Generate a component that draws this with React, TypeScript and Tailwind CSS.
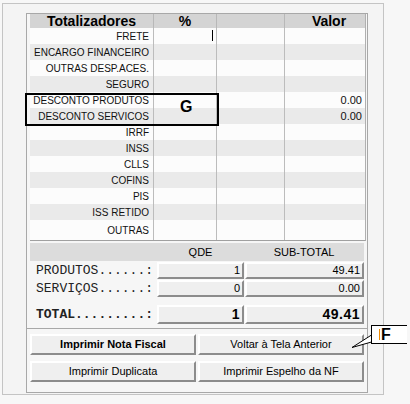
import React from 'react'

const rows = [
  { label: 'FRETE', valor: '' },
  { label: 'ENCARGO FINANCEIRO', valor: '' },
  { label: 'OUTRAS DESP.ACES.', valor: '' },
  { label: 'SEGURO', valor: '' },
  { label: 'DESCONTO PRODUTOS', valor: '0.00' },
  { label: 'DESCONTO SERVICOS', valor: '0.00' },
  { label: 'IRRF', valor: '' },
  { label: 'INSS', valor: '' },
  { label: 'CLLS', valor: '' },
  { label: 'COFINS', valor: '' },
  { label: 'PIS', valor: '' },
  { label: 'ISS RETIDO', valor: '' },
  { label: 'OUTRAS', valor: '' },
]

const sans = "font-['Liberation_Sans',Arial,sans-serif]"
const mono = "font-['Liberation_Mono','Courier_New',monospace]"

const raised =
  'bg-[#efefef] border-2 border-t-white border-l-white border-r-[#8c8c8c] border-b-[#8c8c8c]'

function Campo({ label, qde, sub, bold }: { label: string; qde: string; sub: string; bold?: boolean }) {
  return (
    <div className={`flex items-center ${bold ? 'h-[19px]' : 'h-[17px]'}`}>
      <div className={`w-[127px] pl-[6px] text-[13px] text-[#222] ${mono} ${bold ? 'font-bold' : ''}`}>{label}</div>
      <div
        className={`w-[87px] h-full ${raised} flex items-center justify-end pr-[2px] ${
          bold ? 'text-[14px] font-bold tracking-[0.5px]' : 'text-[11px]'
        }`}
      >
        {qde}
      </div>
      <div
        className={`ml-px w-[119px] h-full ${raised} flex items-center justify-end pr-[2px] ${
          bold ? 'text-[14px] font-bold tracking-[0.5px]' : 'text-[11px]'
        }`}
      >
        {sub}
      </div>
    </div>
  )
}

export default function App() {
  return (
    <div className={`relative w-[410px] h-[404px] bg-[#f7f7f7] pt-[3px] pl-[2px] text-black ${sans}`}>
      <div className="w-[382px] h-[392px] border border-[#c4c4c4] bg-[#f4f4f4] pt-[9px] pl-[23px]">
        <div className="w-[342px] h-[380px] border border-[#a8a8a8] bg-[#f6f6f6] pl-[3px] pr-px">
          {/* tabela de totalizadores */}
          <div className="border-b border-[#a0a0a0] border-r border-r-[#b0b0b0]">
            <div className="flex h-[14px] leading-[14px] text-[14px] font-bold">
              <div className="w-[124px] bg-[#d4d4d4] border-r border-[#b8b8b8] text-center">Totalizadores</div>
              <div className="w-[63px] bg-[#d4d4d4] border-r border-[#b8b8b8] text-center">%</div>
              <div className="w-[68px] bg-[#d4d4d4] border-r border-[#b8b8b8]"></div>
              <div className="flex-1 bg-[#d4d4d4] text-center pl-[8px]">Valor</div>
            </div>
            {rows.map((r, i) => {
              const bg = i % 2 === 1 ? 'bg-[#eaeaea]' : 'bg-[#fcfcfc]'
              const h = i === rows.length - 1 ? 'h-[20px]' : 'h-[16px]'
              return (
                <div key={i} className={`flex ${h} text-[10px] text-[#111]`}>
                  <div className={`w-[124px] ${bg} border-r border-[#bcbcbc] flex items-center justify-end pr-[4px]`}>
                    {r.label}
                  </div>
                  <div className={`relative w-[63px] ${bg} border-r border-[#bcbcbc]`}>
                    {i === 0 && <div className="absolute left-[58px] top-[2px] w-px h-[11px] bg-black" />}
                  </div>
                  <div className={`w-[68px] ${bg} border-r border-[#bcbcbc]`}></div>
                  <div className={`flex-1 ${bg} flex items-center justify-end pr-[3px] text-[11px]`}>{r.valor}</div>
                </div>
              )
            })}
          </div>

          {/* quantidades e subtotais */}
          <div className="mt-[2px] flex h-[18px] items-center bg-[#dcdcdc] text-[11px] mr-[2px]">
            <div className="w-[127px]"></div>
            <div className="w-[87px] text-center">QDE</div>
            <div className="flex-1 text-center">SUB-TOTAL</div>
          </div>
          <div className="mt-px">
            <Campo label="PRODUTOS......:" qde="1" sub="49.41" />
          </div>
          <div className="mt-px">
            <Campo label="SERVIÇOS......:" qde="0" sub="0.00" />
          </div>
          <div className="mt-[8px]">
            <Campo label="TOTAL.........:" qde="1" sub="49.41" bold />
          </div>
          <div className="mt-[4px] -ml-[3px] -mr-px border-b border-[#a8a8a8]"></div>

          {/* botoes */}
          <div className="mt-[5px] grid grid-cols-[166px_166px] gap-x-[2px] gap-y-[6px] text-[11px]">
            <button className={`h-[21px] ${raised} font-bold`}>Imprimir Nota Fiscal</button>
            <button className={`h-[21px] ${raised}`}>Voltar à Tela Anterior</button>
            <button className={`h-[21px] ${raised}`}>Imprimir Duplicata</button>
            <button className={`h-[21px] ${raised}`}>Imprimir Espelho da NF</button>
          </div>
        </div>
      </div>

      {/* marcação G */}
      <div className="absolute left-[25px] top-[93px] w-[194px] h-[33px] border-2 border-black"></div>
      <div className="absolute left-[180px] top-[99px] text-[16px] font-bold leading-none">G</div>

      {/* marcação F */}
      <svg className="absolute left-[348px] top-[324px]" width="62" height="28" viewBox="0 0 62 28">
        <polygon points="23.5,11 4,23.5 23.5,18" fill="white" stroke="black" strokeWidth="1" />
      </svg>
      <div className="absolute left-[371px] top-[325px] w-[36px] h-[19px] bg-white border border-black border-r-0 flex items-center pl-[7px]">
        <div className="w-px h-[11px] bg-[#f08a00]"></div>
        <span className="text-[16px] font-bold leading-none ml-[1px]">F</span>
      </div>
    </div>
  )
}
